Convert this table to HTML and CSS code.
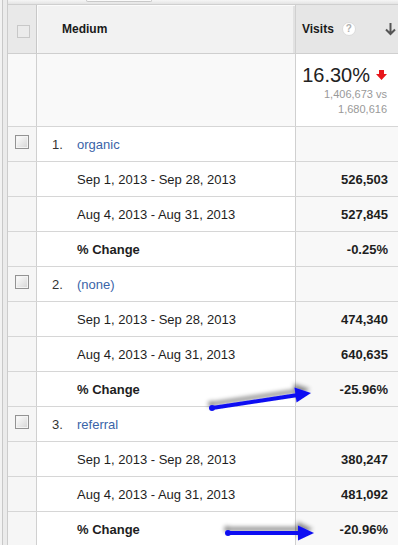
FILE: index.html
```html
<!DOCTYPE html>
<html>
<head>
<meta charset="utf-8">
<link rel="stylesheet" href="styles.css">
</head>
<body>
<div class="page">
  <div class="gutter"></div>
  <div class="main">
    <div class="topbar"><div class="tab"></div></div>

    <div class="row head">
      <div class="c1"><span class="cb cb-head"></span></div>
      <div class="c2"><span class="hlabel">Medium</span></div>
      <div class="c3">
        <span class="hlabel">Visits</span>
        <span class="help">?</span>
        <svg class="sort" width="11" height="14" viewBox="0 0 11 14"><path d="M5.5 1 V12 M1 7.5 L5.5 12 L10 7.5" fill="none" stroke="#555" stroke-width="2"/></svg>
      </div>
    </div>

    <div class="row summary">
      <div class="c1"></div>
      <div class="c2"></div>
      <div class="c3">
        <div class="big">16.30%<svg class="down" width="11" height="10" viewBox="0 0 11 10"><polygon points="3,0 8,0 8,4 11,4 5.5,10 0,4 3,4" fill="#e8161b"/></svg></div>
        <div class="sub">1,406,673 vs<br>1,680,616</div>
      </div>
    </div>

    <div class="row"><div class="c1"><span class="cb"></span></div><div class="c2 lead"><span class="num">1.</span><span class="link">organic</span></div><div class="c3"></div></div>
    <div class="row"><div class="c1"></div><div class="c2 date">Sep 1, 2013 - Sep 28, 2013</div><div class="c3 val">526,503</div></div>
    <div class="row"><div class="c1"></div><div class="c2 date">Aug 4, 2013 - Aug 31, 2013</div><div class="c3 val">527,845</div></div>
    <div class="row"><div class="c1"></div><div class="c2 date strong">% Change</div><div class="c3 val">-0.25%</div></div>

    <div class="row"><div class="c1"><span class="cb"></span></div><div class="c2 lead"><span class="num">2.</span><span class="link">(none)</span></div><div class="c3"></div></div>
    <div class="row"><div class="c1"></div><div class="c2 date">Sep 1, 2013 - Sep 28, 2013</div><div class="c3 val">474,340</div></div>
    <div class="row"><div class="c1"></div><div class="c2 date">Aug 4, 2013 - Aug 31, 2013</div><div class="c3 val">640,635</div></div>
    <div class="row"><div class="c1"></div><div class="c2 date strong">% Change</div><div class="c3 val">-25.96%</div></div>

    <div class="row"><div class="c1"><span class="cb"></span></div><div class="c2 lead"><span class="num">3.</span><span class="link">referral</span></div><div class="c3"></div></div>
    <div class="row"><div class="c1"></div><div class="c2 date">Sep 1, 2013 - Sep 28, 2013</div><div class="c3 val">380,247</div></div>
    <div class="row"><div class="c1"></div><div class="c2 date">Aug 4, 2013 - Aug 31, 2013</div><div class="c3 val">481,092</div></div>
    <div class="row"><div class="c1"></div><div class="c2 date strong">% Change</div><div class="c3 val">-20.96%</div></div>
  </div>

  <svg class="annot" width="398" height="545" viewBox="0 0 398 545">
    <defs>
      <filter id="sh" x="-20%" y="-60%" width="140%" height="220%">
        <feDropShadow dx="-1" dy="-4" stdDeviation="2.2" flood-color="#000" flood-opacity="0.45"/>
      </filter>
    </defs>
    <g filter="url(#sh)" fill="#0f0ff2" stroke="#0f0ff2">
      <line x1="212" y1="408" x2="298" y2="395" stroke-width="4" stroke-linecap="round"/>
      <circle cx="212" cy="408" r="3" stroke="none"/>
      <polygon points="311,393 296.5,402.5 294.5,387.5" stroke="none"/>
    </g>
    <g filter="url(#sh)" fill="#0f0ff2" stroke="#0f0ff2">
      <line x1="228" y1="533" x2="300" y2="533" stroke-width="4" stroke-linecap="round"/>
      <circle cx="228" cy="533" r="3" stroke="none"/>
      <polygon points="314,533 298,525.5 298,540.5" stroke="none"/>
    </g>
  </svg>
</div>
</body>
</html>
```

FILE: styles.css
```css
* { box-sizing: border-box; }
html, body { margin: 0; padding: 0; background: #fff; }
body {
  font-family: Arial, "Liberation Sans", sans-serif;
  font-size: 13px;
  color: #222;
}
.page {
  position: relative;
  display: flex;
  width: 398px;
  height: 545px;
  overflow: hidden;
}
.gutter {
  width: 8px;
  flex: none;
  background: linear-gradient(to right, #f2f2f2 0 2px, #c8c8c8 2px 3px, #ebebeb 3px 7px, #cccccc 7px 8px);
}
.main {
  width: 390px;
  flex: none;
}
.topbar {
  height: 4px;
  background: linear-gradient(#f6f6f6, #e4e4e4);
  position: relative;
}
.tab {
  margin-left: 78px;
  width: 66px;
  height: 2px;
  background: #fafafa;
  border: 1px solid #c9c9c9;
  border-top: none;
  border-radius: 0 0 4px 4px;
}
.row {
  display: grid;
  grid-template-columns: 29px 259px 102px;
  height: 35px;
  border-bottom: 1px solid #d6d6d6;
}
.c1 {
  border-right: 1px solid #d0d0d0;
  background: #f6f6f6;
  display: flex;
  align-items: center;
  justify-content: center;
}
.c2 {
  border-right: 1px solid #d0d0d0;
  background: #fff;
  display: flex;
  align-items: center;
}
.c3 {
  background: #f8f8f8;
  display: flex;
  align-items: center;
  justify-content: flex-end;
  padding-right: 10px;
}
.head {
  height: 50px;
  border-top: 1px solid #cfcfcf;
  border-bottom: 1px solid #cfcfcf;
}
.head .c1 { background: #e9e9e9; border-right-color: #c8c8c8; }
.head .c2 {
  background: #f2f2f2;
  padding-left: 25px;
  box-shadow: inset 1px 1px 0 #fbfbfb, inset -2px 0 0 #e2e2e2;
}
.head .c3 {
  background: #e6e6e6;
  justify-content: flex-start;
  padding-left: 6px;
  padding-right: 0;
}
.hlabel {
  font-weight: bold;
  font-size: 12px;
  color: #1a1a1a;
}
.help {
  width: 14px;
  height: 14px;
  border-radius: 50%;
  background: #fff;
  border: 1px solid #dcdcdc;
  color: #b0b0b0;
  font-size: 10px;
  font-weight: bold;
  line-height: 12px;
  text-align: center;
  margin-left: 8px;
}
.sort { margin-left: 29px; }
.cb {
  width: 14px;
  height: 14px;
  border: 1px solid #939393;
  background: linear-gradient(135deg, #ffffff, #d6d6d6);
  box-shadow: inset 0 0 0 1px #f4f4f4;
  margin-top: -4px;
}
.cb-head {
  width: 13px;
  height: 13px;
  border: 1px solid #c8c8c8;
  background: #ebebeb;
  box-shadow: none;
  margin-top: 4px;
  margin-left: 2px;
}
.summary { height: 73px; }
.summary .c1 { background: #f9f9f9; }
.summary .c2 { background: #f9f9f9; }
.summary .c3 {
  background: #fff;
  flex-direction: column;
  align-items: flex-end;
  justify-content: flex-start;
  padding-top: 10px;
  padding-right: 11px;
}
.big {
  font-size: 20px;
  line-height: 22px;
  color: #222;
  display: flex;
  align-items: center;
}
.down { margin-left: 6px; margin-top: -1px; }
.sub {
  font-size: 11px;
  line-height: 15px;
  color: #999;
  text-align: right;
  margin-top: 1px;
}
.lead { padding-left: 15px; }
.num { width: 25px; color: #333; }
.link { color: #3a64a8; }
.date { padding-left: 40px; color: #1e1e1e; }
.strong { font-weight: bold; }
.val { font-weight: bold; color: #1e1e1e; }
.annot {
  position: absolute;
  left: 0;
  top: 0;
  pointer-events: none;
}
```
